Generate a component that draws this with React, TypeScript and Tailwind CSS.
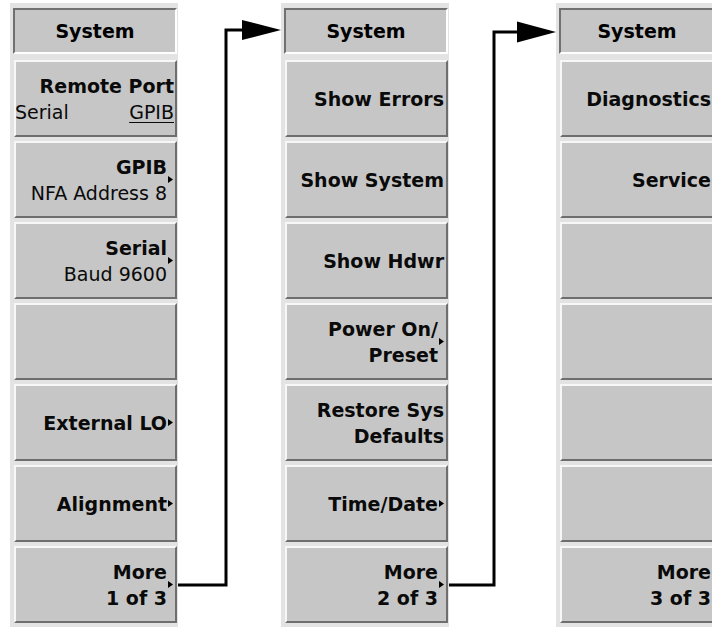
import React from "react";

type Btn = {
  lines?: { t: string; b?: boolean }[];
  arrow?: boolean;
  remote?: boolean;
};

const Arrow = () => (
  <svg width="5" height="7" viewBox="0 0 5 7" className="shrink-0">
    <polygon points="0,0 5,3.5 0,7" fill="#000" />
  </svg>
);

function SoftKey({ b }: { b: Btn }) {
  const base =
    "h-[77px] ml-[1px] flex items-center justify-end bg-[#c6c6c6] border-2 border-t-[#f7f7f7] border-l-[#f7f7f7] border-b-[#6e6e6e] border-r-[#6e6e6e] text-[#0a0a0a]";
  if (b.remote) {
    return (
      <div className={base + " pr-[1px]"}>
        <div className="flex flex-col w-full leading-[26px] pt-[1px]">
          <div className="text-right font-bold">Remote Port</div>
          <div className="flex justify-between">
            <span className="-ml-[1px]">Serial</span>
            <span className="underline underline-offset-[3px] decoration-1">GPIB</span>
          </div>
        </div>
      </div>
    );
  }
  return (
    <div className={base + " pr-[2px]"}>
      <div className="flex flex-col items-end leading-[26px] pt-[1px]">
        {b.lines?.map((l, i) => (
          <div key={i} className={l.b === false ? "font-normal whitespace-nowrap" : "font-bold whitespace-nowrap"}>
            {l.t}
          </div>
        ))}
      </div>
      {b.arrow && (
        <div className="ml-[1px] flex items-center">
          <Arrow />
        </div>
      )}
    </div>
  );
}

function Panel({ buttons, narrow }: { buttons: Btn[]; narrow?: boolean }) {
  return (
    <div
      className={
        (narrow ? "w-[160px]" : "w-[168px]") +
        " mt-[3px] shrink-0 bg-[#e3e3e3] pt-[5px] pl-[3px] pr-[1px] pb-[4px]"
      }
    >
      <div className="h-[46px] flex items-center justify-center bg-[#c6c6c6] border-2 border-t-[#707070] border-l-[#707070] border-b-[#ffffff] border-r-[#ffffff] font-bold">
        System
      </div>
      <div className="mt-[6px] flex flex-col gap-[4px]">
        {buttons.map((b, i) => (
          <SoftKey key={i} b={b} />
        ))}
      </div>
    </div>
  );
}

function Connector({ w, vx, topY, headStart, headH }: { w: number; vx: number; topY: number; headStart: number; headH: number }) {
  return (
    <svg width={w} height={628} className="shrink-0">
      <polyline
        points={`0,585 ${vx},585 ${vx},${topY} ${headStart + 2},${topY}`}
        fill="none"
        stroke="#000"
        strokeWidth={3}
        strokeLinejoin="miter"
      />
      <polygon
        points={`${headStart},${topY - headH / 2} ${w},${topY} ${headStart},${topY + headH / 2}`}
        fill="#000"
      />
    </svg>
  );
}

export default function App() {
  const col1: Btn[] = [
    { remote: true },
    { lines: [{ t: "GPIB" }, { t: "NFA Address 8", b: false }], arrow: true },
    { lines: [{ t: "Serial" }, { t: "Baud 9600", b: false }], arrow: true },
    { lines: [] },
    { lines: [{ t: "External LO" }], arrow: true },
    { lines: [{ t: "Alignment" }], arrow: true },
    { lines: [{ t: "More" }, { t: "1 of 3" }], arrow: true },
  ];
  const col2: Btn[] = [
    { lines: [{ t: "Show Errors" }] },
    { lines: [{ t: "Show System" }] },
    { lines: [{ t: "Show Hdwr" }] },
    { lines: [{ t: "Power On/" }, { t: "Preset" }], arrow: true },
    { lines: [{ t: "Restore Sys" }, { t: "Defaults" }] },
    { lines: [{ t: "Time/Date" }], arrow: true },
    { lines: [{ t: "More" }, { t: "2 of 3" }], arrow: true },
  ];
  const col3: Btn[] = [
    { lines: [{ t: "Diagnostics" }] },
    { lines: [{ t: "Service" }] },
    { lines: [] },
    { lines: [] },
    { lines: [] },
    { lines: [] },
    { lines: [{ t: "More" }, { t: "3 of 3" }] },
  ];
  return (
    <div className="w-[712px] h-[628px] overflow-hidden bg-white font-['DejaVu_Sans',sans-serif] text-[19px]">
      <div className="flex items-start pl-[10px] w-[712px]">
        <Panel buttons={col1} />
        <Connector w={103} vx={48} topY={30} headStart={64} headH={20} />
        <Panel buttons={col2} />
        <Connector w={107} vx={45} topY={32} headStart={68} headH={21} />
        <Panel buttons={col3} narrow />
      </div>
    </div>
  );
}
